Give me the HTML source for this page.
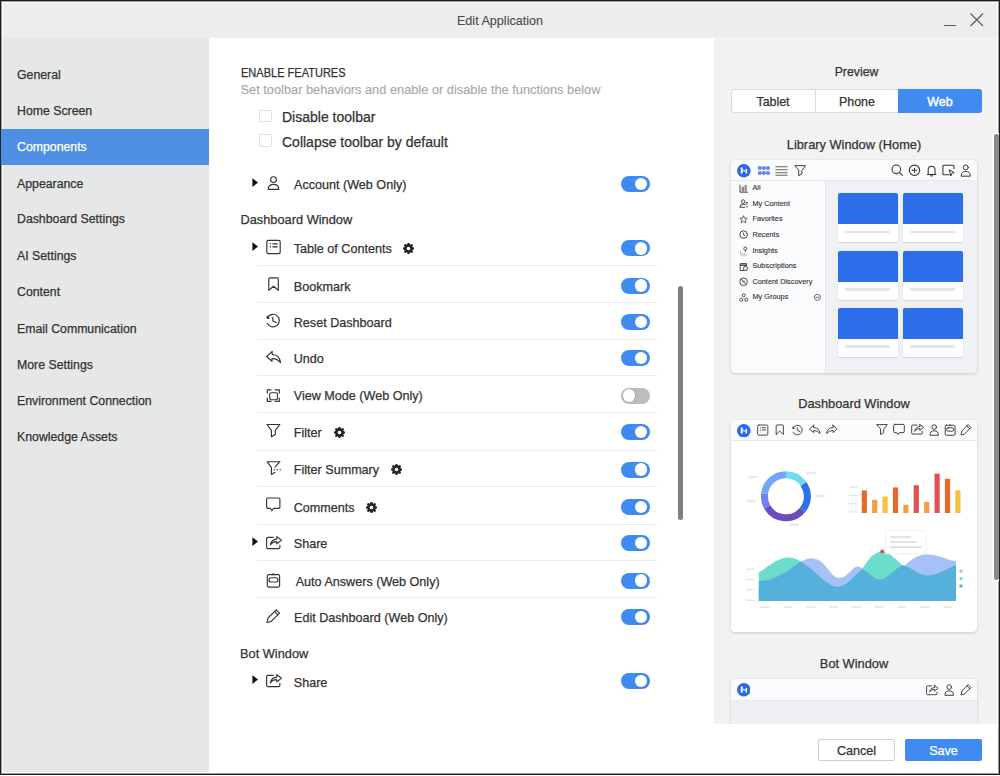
<!DOCTYPE html>
<html><head><meta charset="utf-8"><style>
html,body{margin:0;padding:0;width:1000px;height:776px;overflow:hidden;background:#fff;}
body{position:relative;font-family:"Liberation Sans", sans-serif;}
.a{position:absolute;}
.t{position:absolute;white-space:nowrap;-webkit-text-stroke:0.25px currentColor;}
</style></head><body>
<div class="a" style="left:0px;top:0px;width:1000px;height:775px;background:#1e1e1e"></div>
<div class="a" style="left:1px;top:1px;width:998px;height:773px;background:#9a9a9a"></div>
<div class="a" style="left:2px;top:2px;width:996px;height:771px;background:#ffffff"></div>
<div class="a" style="left:3px;top:3px;width:994px;height:35px;background:#ededed"></div>
<div class="t" style="left:400px;top:12.63px;width:200px;text-align:center;font-size:12.6px;line-height:16px;color:#4a4a4a;font-weight:normal;-webkit-text-stroke:0.1px currentColor">Edit Application</div>
<div class="a" style="left:943.5px;top:25px;width:12px;height:1.2px;background:#5a5a5a"></div>
<svg class="a" style="left:969px;top:12px;" width="15" height="15" viewBox="0 0 15 15"><path d="M1.5 1.5L14 14M14 1.5L1.5 14" stroke="#5a5a5a" stroke-width="1.15"/></svg>
<div class="a" style="left:3px;top:38px;width:206px;height:734px;background:#e6e8e8"></div>
<div class="a" style="left:1px;top:129px;width:208px;height:36px;background:#4e8fe3"></div>
<div class="t" style="left:17px;top:66.54px;font-size:12.3px;line-height:16px;color:#333;font-weight:normal;">General</div>
<div class="t" style="left:17px;top:102.74px;font-size:12.3px;line-height:16px;color:#333;font-weight:normal;">Home Screen</div>
<div class="t" style="left:17px;top:139.04px;font-size:12.3px;line-height:16px;color:#fff;font-weight:normal;">Components</div>
<div class="t" style="left:17px;top:175.74px;font-size:12.3px;line-height:16px;color:#333;font-weight:normal;">Appearance</div>
<div class="t" style="left:17px;top:211.34px;font-size:12.3px;line-height:16px;color:#333;font-weight:normal;">Dashboard Settings</div>
<div class="t" style="left:17px;top:247.64px;font-size:12.3px;line-height:16px;color:#333;font-weight:normal;">AI Settings</div>
<div class="t" style="left:17px;top:283.94px;font-size:12.3px;line-height:16px;color:#333;font-weight:normal;">Content</div>
<div class="t" style="left:17px;top:320.54px;font-size:12.3px;line-height:16px;color:#333;font-weight:normal;">Email Communication</div>
<div class="t" style="left:17px;top:356.74px;font-size:12.3px;line-height:16px;color:#333;font-weight:normal;">More Settings</div>
<div class="t" style="left:17px;top:392.74px;font-size:12.3px;line-height:16px;color:#333;font-weight:normal;">Environment Connection</div>
<div class="t" style="left:17px;top:428.64px;font-size:12.3px;line-height:16px;color:#333;font-weight:normal;">Knowledge Assets</div>
<div class="a" style="left:714px;top:38px;width:283px;height:686px;background:#f2f2f2"></div>
<div class="t" style="left:240.5px;top:64.70px;font-size:12.4px;line-height:16px;color:#333;font-weight:normal;transform:scaleX(0.89);transform-origin:0 0">ENABLE FEATURES</div>
<div class="t" style="left:240.5px;top:81.06px;font-size:12.8px;line-height:17px;color:#a6a6a6;font-weight:normal;-webkit-text-stroke:0.1px currentColor">Set toolbar behaviors and enable or disable the functions below</div>
<div class="a" style="left:259px;top:109.5px;width:12.5px;height:12.5px;border:1px solid #e0e0e0;border-radius:2px;box-sizing:border-box;background:#fff"></div>
<div class="a" style="left:259px;top:134px;width:12.5px;height:12.5px;border:1px solid #e0e0e0;border-radius:2px;box-sizing:border-box;background:#fff"></div>
<div class="t" style="left:282px;top:108.15px;font-size:14px;line-height:18px;color:#333;font-weight:normal;">Disable toolbar</div>
<div class="t" style="left:282px;top:132.65px;font-size:14px;line-height:18px;color:#333;font-weight:normal;">Collapse toolbar by default</div>
<div class="t" style="left:294px;top:176.93px;font-size:12.6px;line-height:16px;color:#333;font-weight:normal;">Account (Web Only)</div>
<svg class="a" style="left:262px;top:172px;" width="24" height="24" viewBox="0 0 24 24"><g fill="none" stroke="#333" stroke-width="1.15" stroke-linejoin="round" stroke-linecap="round"><circle cx="11.5" cy="7.6" r="2.9"/><path d="M6.2 17.4C6.2 13.6 8.2 12.3 11.5 12.3C14.8 12.3 16.8 13.6 16.8 17.4Z"/></g></svg>
<div class="a" style="left:621px;top:176px;width:29px;height:16px;background:#3f8bf2;border-radius:8px"></div>
<div class="a" style="left:635px;top:177.8px;width:12.4px;height:12.4px;background:#fff;border-radius:50%"></div>
<svg class="a" style="left:252px;top:177.8px;" width="7" height="10" viewBox="0 0 7 10"><path d="M0.4 0.2L6 4.6L0.4 9.1Z" fill="#111"/></svg>
<div class="t" style="left:293.75px;top:241.38px;font-size:12.6px;line-height:16px;color:#333;font-weight:normal;">Table of Contents</div>
<svg class="a" style="left:262px;top:235px;" width="24" height="24" viewBox="0 0 24 24"><g fill="none" stroke="#333" stroke-width="1.15" stroke-linejoin="round" stroke-linecap="round"><rect x="4.8" y="5.3" width="13.4" height="13.3" rx="1.6"/><path d="M10.8 8.8H15.2M10.8 11.8H15.2"/></g><circle cx="8.4" cy="8.8" r="0.7" fill="#333"/><circle cx="8.4" cy="11.8" r="0.7" fill="#333"/><circle cx="8.4" cy="14.6" r="0.6" fill="#999"/></svg>
<div class="a" style="left:621px;top:240.4px;width:29px;height:16px;background:#3f8bf2;border-radius:8px"></div>
<div class="a" style="left:635px;top:242.20000000000002px;width:12.4px;height:12.4px;background:#fff;border-radius:50%"></div>
<svg class="a" style="left:252px;top:242.20000000000002px;" width="7" height="10" viewBox="0 0 7 10"><path d="M0.4 0.2L6 4.6L0.4 9.1Z" fill="#111"/></svg>
<svg class="a" style="left:403.0px;top:242.9px;" width="11" height="11" viewBox="0 0 11 11"><polygon points="5.12,0.11 5.88,0.11 6.84,2.27 9.04,1.42 9.58,1.96 8.73,4.16 10.89,5.12 10.89,5.88 8.73,6.84 9.58,9.04 9.04,9.58 6.84,8.73 5.88,10.89 5.12,10.89 4.16,8.73 1.96,9.58 1.42,9.04 2.27,6.84 0.11,5.88 0.11,5.12 2.27,4.16 1.42,1.96 1.96,1.42 4.16,2.27" fill="#222" stroke="#222" stroke-width="0.9" stroke-linejoin="round"/><circle cx="5.5" cy="5.5" r="1.8" fill="#fff"/></svg>
<div class="a" style="left:257px;top:265.0px;width:400px;height:1px;background:#ebebeb"></div>
<div class="t" style="left:293.75px;top:278.88px;font-size:12.6px;line-height:16px;color:#333;font-weight:normal;">Bookmark</div>
<svg class="a" style="left:262px;top:274px;" width="24" height="24" viewBox="0 0 24 24"><g fill="none" stroke="#333" stroke-width="1.15" stroke-linejoin="round" stroke-linecap="round"><path d="M6.8 16.3V5Q6.8 3.9 7.9 3.9H15.2Q16.3 3.9 16.3 5V16.3L11.55 12.3Z"/></g></svg>
<div class="a" style="left:621px;top:277.6px;width:29px;height:16px;background:#3f8bf2;border-radius:8px"></div>
<div class="a" style="left:635px;top:279.40000000000003px;width:12.4px;height:12.4px;background:#fff;border-radius:50%"></div>
<div class="a" style="left:257px;top:301.5px;width:400px;height:1px;background:#ebebeb"></div>
<div class="t" style="left:293.75px;top:315.13px;font-size:12.6px;line-height:16px;color:#333;font-weight:normal;">Reset Dashboard</div>
<svg class="a" style="left:262px;top:310px;" width="24" height="24" viewBox="0 0 24 24"><g fill="none" stroke="#333" stroke-width="1.15" stroke-linejoin="round" stroke-linecap="round"><path d="M5.6 7.4A6.3 6.3 0 1 1 5.4 13.4"/><path d="M10.8 7.4V10.9L14.2 12.6"/></g><path d="M4.5 5.6L4.9 9.1L8.2 8.5Z" fill="#222"/></svg>
<div class="a" style="left:621px;top:314px;width:29px;height:16px;background:#3f8bf2;border-radius:8px"></div>
<div class="a" style="left:635px;top:315.8px;width:12.4px;height:12.4px;background:#fff;border-radius:50%"></div>
<div class="a" style="left:257px;top:338.5px;width:400px;height:1px;background:#ebebeb"></div>
<div class="t" style="left:293.75px;top:350.63px;font-size:12.6px;line-height:16px;color:#333;font-weight:normal;">Undo</div>
<svg class="a" style="left:262px;top:346px;" width="24" height="24" viewBox="0 0 24 24"><g fill="none" stroke="#333" stroke-width="1.15" stroke-linejoin="round" stroke-linecap="round"><path d="M10.2 5.4L4.7 10.5L10 15.3V12.6Q15.2 12.3 18.6 16.6Q17.6 8.8 10.2 8.5Z"/></g></svg>
<div class="a" style="left:621px;top:350px;width:29px;height:16px;background:#3f8bf2;border-radius:8px"></div>
<div class="a" style="left:635px;top:351.8px;width:12.4px;height:12.4px;background:#fff;border-radius:50%"></div>
<div class="a" style="left:257px;top:375.0px;width:400px;height:1px;background:#ebebeb"></div>
<div class="t" style="left:293.75px;top:388.33px;font-size:12.6px;line-height:16px;color:#333;font-weight:normal;">View Mode (Web Only)</div>
<svg class="a" style="left:262px;top:383px;" width="24" height="24" viewBox="0 0 24 24"><g fill="none" stroke="#333" stroke-width="1.15" stroke-linejoin="round" stroke-linecap="round"><path d="M5.3 10.1V6.8H9.1M13.3 6.8H17.3V10.1M5.3 15.1V18.4H9.1M13.3 18.4H17.3V15.1"/><rect x="7.7" y="9.7" width="7.8" height="7" rx="1.6"/></g></svg>
<div class="a" style="left:621px;top:387.5px;width:29px;height:16px;background:#bdbdbd;border-radius:8px"></div>
<div class="a" style="left:622.7px;top:389.1px;width:12.6px;height:12.6px;background:#fff;border-radius:50%;box-shadow:0 0 0 0.8px #a8a8a8"></div>
<div class="a" style="left:257px;top:411.5px;width:400px;height:1px;background:#ebebeb"></div>
<div class="t" style="left:293.75px;top:425.13px;font-size:12.6px;line-height:16px;color:#333;font-weight:normal;">Filter</div>
<svg class="a" style="left:262px;top:420px;" width="24" height="24" viewBox="0 0 24 24"><g fill="none" stroke="#333" stroke-width="1.15" stroke-linejoin="round" stroke-linecap="round"><path d="M5 4.5H17.9L13.3 10.3V14.6L9.4 16.8V10.3Z"/></g></svg>
<div class="a" style="left:621px;top:424.3px;width:29px;height:16px;background:#3f8bf2;border-radius:8px"></div>
<div class="a" style="left:635px;top:426.1px;width:12.4px;height:12.4px;background:#fff;border-radius:50%"></div>
<svg class="a" style="left:333.5px;top:426.8px;" width="11" height="11" viewBox="0 0 11 11"><polygon points="5.12,0.11 5.88,0.11 6.84,2.27 9.04,1.42 9.58,1.96 8.73,4.16 10.89,5.12 10.89,5.88 8.73,6.84 9.58,9.04 9.04,9.58 6.84,8.73 5.88,10.89 5.12,10.89 4.16,8.73 1.96,9.58 1.42,9.04 2.27,6.84 0.11,5.88 0.11,5.12 2.27,4.16 1.42,1.96 1.96,1.42 4.16,2.27" fill="#222" stroke="#222" stroke-width="0.9" stroke-linejoin="round"/><circle cx="5.5" cy="5.5" r="1.8" fill="#fff"/></svg>
<div class="a" style="left:257px;top:449.5px;width:400px;height:1px;background:#ebebeb"></div>
<div class="t" style="left:293.75px;top:462.33px;font-size:12.6px;line-height:16px;color:#333;font-weight:normal;">Filter Summary</div>
<svg class="a" style="left:262px;top:457px;" width="24" height="24" viewBox="0 0 24 24"><g fill="none" stroke="#333" stroke-width="1.15" stroke-linejoin="round" stroke-linecap="round"><path d="M13 10.2L17.9 4.7H5L9.4 10.3V17.4L13 15.3"/></g><circle cx="12.4" cy="12.7" r="0.7" fill="#333"/><circle cx="15.2" cy="12.7" r="0.7" fill="#333"/><circle cx="18.2" cy="12.7" r="0.7" fill="#333"/></svg>
<div class="a" style="left:621px;top:461.5px;width:29px;height:16px;background:#3f8bf2;border-radius:8px"></div>
<div class="a" style="left:635px;top:463.3px;width:12.4px;height:12.4px;background:#fff;border-radius:50%"></div>
<svg class="a" style="left:390.5px;top:464.0px;" width="11" height="11" viewBox="0 0 11 11"><polygon points="5.12,0.11 5.88,0.11 6.84,2.27 9.04,1.42 9.58,1.96 8.73,4.16 10.89,5.12 10.89,5.88 8.73,6.84 9.58,9.04 9.04,9.58 6.84,8.73 5.88,10.89 5.12,10.89 4.16,8.73 1.96,9.58 1.42,9.04 2.27,6.84 0.11,5.88 0.11,5.12 2.27,4.16 1.42,1.96 1.96,1.42 4.16,2.27" fill="#222" stroke="#222" stroke-width="0.9" stroke-linejoin="round"/><circle cx="5.5" cy="5.5" r="1.8" fill="#fff"/></svg>
<div class="a" style="left:257px;top:486.0px;width:400px;height:1px;background:#ebebeb"></div>
<div class="t" style="left:293.75px;top:499.83px;font-size:12.6px;line-height:16px;color:#333;font-weight:normal;">Comments</div>
<svg class="a" style="left:262px;top:495px;" width="24" height="24" viewBox="0 0 24 24"><g fill="none" stroke="#333" stroke-width="1.15" stroke-linejoin="round" stroke-linecap="round"><path d="M6 3H16.5Q17.9 3 17.9 4.4V11.9Q17.9 13.3 16.5 13.3H11.6L9.9 15.8L8.3 13.3H6Q4.6 13.3 4.6 11.9V4.4Q4.6 3 6 3Z"/></g></svg>
<div class="a" style="left:621px;top:499.3px;width:29px;height:16px;background:#3f8bf2;border-radius:8px"></div>
<div class="a" style="left:635px;top:501.1px;width:12.4px;height:12.4px;background:#fff;border-radius:50%"></div>
<svg class="a" style="left:365.9px;top:501.8px;" width="11" height="11" viewBox="0 0 11 11"><polygon points="5.12,0.11 5.88,0.11 6.84,2.27 9.04,1.42 9.58,1.96 8.73,4.16 10.89,5.12 10.89,5.88 8.73,6.84 9.58,9.04 9.04,9.58 6.84,8.73 5.88,10.89 5.12,10.89 4.16,8.73 1.96,9.58 1.42,9.04 2.27,6.84 0.11,5.88 0.11,5.12 2.27,4.16 1.42,1.96 1.96,1.42 4.16,2.27" fill="#222" stroke="#222" stroke-width="0.9" stroke-linejoin="round"/><circle cx="5.5" cy="5.5" r="1.8" fill="#fff"/></svg>
<div class="a" style="left:257px;top:523.5px;width:400px;height:1px;background:#ebebeb"></div>
<div class="t" style="left:293.75px;top:535.93px;font-size:12.6px;line-height:16px;color:#333;font-weight:normal;">Share</div>
<svg class="a" style="left:262px;top:531px;" width="24" height="24" viewBox="0 0 24 24"><g fill="none" stroke="#333" stroke-width="1.15" stroke-linejoin="round" stroke-linecap="round"><path d="M11.3 6.3H6Q4.6 6.3 4.6 7.7V16.2Q4.6 17.6 6 17.6H16.5Q17.9 17.6 17.9 16.2V14.3"/><path d="M14.8 5.6L19.4 9.3L14.8 12.9V10.7Q10.6 10.5 8.3 14Q9.4 8.5 14.8 8.1Z"/></g></svg>
<div class="a" style="left:621px;top:535px;width:29px;height:16px;background:#3f8bf2;border-radius:8px"></div>
<div class="a" style="left:635px;top:536.8px;width:12.4px;height:12.4px;background:#fff;border-radius:50%"></div>
<svg class="a" style="left:252px;top:536.8px;" width="7" height="10" viewBox="0 0 7 10"><path d="M0.4 0.2L6 4.6L0.4 9.1Z" fill="#111"/></svg>
<div class="a" style="left:257px;top:560.0px;width:400px;height:1px;background:#ebebeb"></div>
<div class="t" style="left:295.7px;top:574.13px;font-size:12.6px;line-height:16px;color:#333;font-weight:normal;">Auto Answers (Web Only)</div>
<svg class="a" style="left:262px;top:568px;" width="24" height="24" viewBox="0 0 24 24"><g fill="none" stroke="#333" stroke-width="1.15" stroke-linejoin="round" stroke-linecap="round"><rect x="5.3" y="6.6" width="12.3" height="12.5" rx="1.5"/><rect x="7" y="9.7" width="9" height="4.3" rx="2.1"/><path d="M10.3 6.6Q11.4 5 12.5 6.6"/></g></svg>
<div class="a" style="left:621px;top:572.5px;width:29px;height:16px;background:#3f8bf2;border-radius:8px"></div>
<div class="a" style="left:635px;top:574.3px;width:12.4px;height:12.4px;background:#fff;border-radius:50%"></div>
<div class="a" style="left:257px;top:596.5px;width:400px;height:1px;background:#ebebeb"></div>
<div class="t" style="left:294px;top:609.83px;font-size:12.6px;line-height:16px;color:#333;font-weight:normal;">Edit Dashboard (Web Only)</div>
<svg class="a" style="left:262px;top:605px;" width="24" height="24" viewBox="0 0 24 24"><g fill="none" stroke="#333" stroke-width="1.15" stroke-linejoin="round" stroke-linecap="round"><path d="M14.2 4.8L17.5 8.2L9.2 16.4L5 17.5L6 13Z"/><path d="M12.6 6.4L15.9 9.8"/></g></svg>
<div class="a" style="left:621px;top:609px;width:29px;height:16px;background:#3f8bf2;border-radius:8px"></div>
<div class="a" style="left:635px;top:610.8px;width:12.4px;height:12.4px;background:#fff;border-radius:50%"></div>
<div class="t" style="left:293.75px;top:674.53px;font-size:12.6px;line-height:16px;color:#333;font-weight:normal;">Share</div>
<svg class="a" style="left:262px;top:669px;" width="24" height="24" viewBox="0 0 24 24"><g fill="none" stroke="#333" stroke-width="1.15" stroke-linejoin="round" stroke-linecap="round"><path d="M11.3 6.3H6Q4.6 6.3 4.6 7.7V16.2Q4.6 17.6 6 17.6H16.5Q17.9 17.6 17.9 16.2V14.3"/><path d="M14.8 5.6L19.4 9.3L14.8 12.9V10.7Q10.6 10.5 8.3 14Q9.4 8.5 14.8 8.1Z"/></g></svg>
<div class="a" style="left:621px;top:673px;width:29px;height:16px;background:#3f8bf2;border-radius:8px"></div>
<div class="a" style="left:635px;top:674.8px;width:12.4px;height:12.4px;background:#fff;border-radius:50%"></div>
<svg class="a" style="left:252px;top:674.8px;" width="7" height="10" viewBox="0 0 7 10"><path d="M0.4 0.2L6 4.6L0.4 9.1Z" fill="#111"/></svg>
<div class="t" style="left:240.5px;top:211.31px;font-size:12.8px;line-height:17px;color:#333;font-weight:normal;">Dashboard Window</div>
<div class="t" style="left:240px;top:645.06px;font-size:12.8px;line-height:17px;color:#333;font-weight:normal;">Bot Window</div>
<div class="a" style="left:678px;top:286px;width:5px;height:234px;background:#808080;border-radius:2.5px"></div>
<div class="t" style="left:731px;top:63.74px;width:251px;text-align:center;font-size:12.3px;line-height:16px;color:#333;font-weight:normal;">Preview</div>
<div class="a" style="left:731px;top:88.5px;width:251px;height:24.5px;background:#fff;border:1px solid #dadada;border-radius:3px;box-sizing:border-box"></div>
<div class="a" style="left:815px;top:88.5px;width:1px;height:24.5px;background:#dadada"></div>
<div class="a" style="left:898px;top:88.5px;width:84px;height:24.5px;background:#3f8bf2;border-radius:0 3px 3px 0"></div>
<div class="t" style="left:731px;top:93.70px;width:84px;text-align:center;font-size:12.4px;line-height:16px;color:#333;font-weight:normal;">Tablet</div>
<div class="t" style="left:816px;top:93.70px;width:82px;text-align:center;font-size:12.4px;line-height:16px;color:#333;font-weight:normal;">Phone</div>
<div class="t" style="left:898px;top:93.70px;width:84px;text-align:center;font-size:12.4px;line-height:16px;color:#fff;font-weight:normal;-webkit-text-stroke:0.45px #fff">Web</div>
<div class="t" style="left:731px;top:135.76px;width:246px;text-align:center;font-size:12.8px;line-height:17px;color:#333;font-weight:normal;">Library Window (Home)</div>
<div class="t" style="left:731px;top:394.86px;width:246px;text-align:center;font-size:12.8px;line-height:17px;color:#333;font-weight:normal;">Dashboard Window</div>
<div class="t" style="left:731px;top:655.06px;width:246px;text-align:center;font-size:12.8px;line-height:17px;color:#333;font-weight:normal;">Bot Window</div>
<div class="a" style="left:731px;top:160px;width:246px;height:213px;background:#fafbfd;border-radius:4px;box-shadow:0 1px 3px rgba(0,0,0,0.16),0 0 1px rgba(0,0,0,0.12)"></div>
<div class="a" style="left:826px;top:180.5px;width:151px;height:192.5px;background:#f0f1f4;border-radius:0 0 4px 0"></div>
<div class="a" style="left:825px;top:180.5px;width:1px;height:192.5px;background:#e4e6ea"></div>
<div class="a" style="left:731px;top:180px;width:246px;height:1px;background:#e6e8ec"></div>
<svg class="a" style="left:737.00px;top:164.10px" width="13.60" height="13.60" viewBox="0 0 13.6 13.6"><circle cx="6.8" cy="6.8" r="6.8" fill="#2a68ee"/><rect x="3.80" y="3.50" width="1.9" height="6" fill="#fff"/><rect x="8.60" y="4.90" width="1.5" height="4.6" fill="#fff"/><path d="M5.70 6.40L8.60 7.20" stroke="#dfe6ff" stroke-width="1.3"/></svg>
<svg class="a" style="left:755px;top:164px;" width="17" height="13" viewBox="0 0 17 13"><ellipse cx="4.80" cy="4.00" rx="2.1" ry="1.9" fill="#6a86f2"/><ellipse cx="4.80" cy="9.00" rx="2.1" ry="1.9" fill="#6a86f2"/><ellipse cx="8.90" cy="4.00" rx="2.1" ry="1.9" fill="#6a86f2"/><ellipse cx="8.90" cy="9.00" rx="2.1" ry="1.9" fill="#6a86f2"/><ellipse cx="13.00" cy="4.00" rx="2.1" ry="1.9" fill="#6a86f2"/><ellipse cx="13.00" cy="9.00" rx="2.1" ry="1.9" fill="#6a86f2"/></svg>
<svg class="a" style="left:774px;top:164px;" width="15" height="13" viewBox="0 0 15 13"><path d="M1.5 2.8H13.5M1.5 5.8H13.5M1.5 8.8H13.5M1.5 11.3H13.5" stroke="#666" stroke-width="1.1"/></svg>
<svg class="a" style="left:790.91px;top:161.77px;overflow:visible" width="19.68" height="19.68" viewBox="0 0 24 24"><g fill="none" stroke="#333" stroke-width="1.15" stroke-linejoin="round" stroke-linecap="round"><path d="M5 4.5H17.9L13.3 10.3V14.6L9.4 16.8V10.3Z"/></g></svg>
<svg class="a" style="left:890px;top:163px;" width="15" height="15" viewBox="0 0 15 15"><circle cx="6.3" cy="6.3" r="4.3" fill="none" stroke="#333" stroke-width="1.05"/><path d="M9.4 9.4L12.8 12.6" stroke="#333" stroke-width="1.1"/></svg>
<svg class="a" style="left:907px;top:163px;" width="15" height="15" viewBox="0 0 15 15"><circle cx="7.5" cy="7.3" r="5.2" fill="none" stroke="#333" stroke-width="1.05"/><path d="M4.8 7.3H10.2M7.5 4.9V9.7" stroke="#333" stroke-width="1.05"/></svg>
<svg class="a" style="left:924px;top:163px;" width="15" height="15" viewBox="0 0 15 15"><path d="M3 11.5H12.2M4.2 11.3V7.2Q4.2 3.3 7.6 3.3Q11 3.3 11 7.2V11.3M6.3 12.2Q7.6 14 8.9 12.2" fill="none" stroke="#333" stroke-width="1.05" stroke-linejoin="round"/></svg>
<svg class="a" style="left:941px;top:163px;" width="15" height="15" viewBox="0 0 15 15"><path d="M8.5 11.8H3Q1.9 11.8 1.9 10.7V3.3Q1.9 2.3 3 2.3H11.8Q12.9 2.3 12.9 3.3V6.2" fill="none" stroke="#333" stroke-width="1.05"/><path d="M8.2 6.8L13.2 9.6L10.8 10.4L9.8 13Z" fill="none" stroke="#333" stroke-width="1"/></svg>
<svg class="a" style="left:956.23px;top:161.05px;overflow:visible" width="20.40" height="20.40" viewBox="0 0 24 24"><g fill="none" stroke="#333" stroke-width="1.15" stroke-linejoin="round" stroke-linecap="round"><circle cx="11.5" cy="7.6" r="2.9"/><path d="M6.2 17.4C6.2 13.6 8.2 12.3 11.5 12.3C14.8 12.3 16.8 13.6 16.8 17.4Z"/></g></svg>
<div class="t" style="left:752.4px;top:183.25px;font-size:7.35px;line-height:10px;color:#333;font-weight:normal;-webkit-text-stroke:0.12px currentColor">All</div>
<svg class="a" style="left:739px;top:183.5px;" width="10" height="9" viewBox="0 0 10 9"><path d="M1 0.8V8.2H9" fill="none" stroke="#333" stroke-width="0.9"/><path d="M3.2 7.6V3.2H4.4V7.6M6 7.6V1.6H7.2V7.6" fill="none" stroke="#444" stroke-width="0.7"/></svg>
<div class="t" style="left:752.4px;top:198.85px;font-size:7.35px;line-height:10px;color:#333;font-weight:normal;-webkit-text-stroke:0.12px currentColor">My Content</div>
<svg class="a" style="left:739px;top:199.1px;" width="10" height="9" viewBox="0 0 10 9"><circle cx="4.2" cy="2.6" r="1.8" fill="none" stroke="#333" stroke-width="0.9"/><path d="M0.9 8.3Q0.9 5.2 4.2 5.2Q6 5.2 6.8 6.2M0.9 8.3H6" fill="none" stroke="#333" stroke-width="0.9"/><path d="M6.6 3.5H9M6.6 5H9M7 7.8H9" stroke="#444" stroke-width="0.8"/></svg>
<div class="t" style="left:752.4px;top:214.45px;font-size:7.35px;line-height:10px;color:#333;font-weight:normal;-webkit-text-stroke:0.12px currentColor">Favorites</div>
<svg class="a" style="left:739px;top:214.7px;" width="10" height="9" viewBox="0 0 10 9"><polygon points="4.50,0.70 5.50,3.22 8.21,3.39 6.12,5.13 6.79,7.76 4.50,6.30 2.21,7.76 2.88,5.13 0.79,3.39 3.50,3.22" fill="none" stroke="#444" stroke-width="0.8"/></svg>
<div class="t" style="left:752.4px;top:230.05px;font-size:7.35px;line-height:10px;color:#333;font-weight:normal;-webkit-text-stroke:0.12px currentColor">Recents</div>
<svg class="a" style="left:739px;top:230.29999999999998px;" width="10" height="10" viewBox="0 0 10 10"><circle cx="4.6" cy="4.6" r="3.8" fill="none" stroke="#333" stroke-width="0.9"/><path d="M4.4 2.5V4.8L6 5.8" fill="none" stroke="#333" stroke-width="0.8"/></svg>
<div class="t" style="left:752.4px;top:245.65px;font-size:7.35px;line-height:10px;color:#333;font-weight:normal;-webkit-text-stroke:0.12px currentColor">Insights</div>
<svg class="a" style="left:739px;top:245.89999999999998px;" width="10" height="10" viewBox="0 0 10 10"><path d="M1.5 8.5V5M3.5 8.5V6.5M5.5 8.5V7" stroke="#b9b9b9" stroke-width="0.9"/><circle cx="6.3" cy="2.6" r="1.6" fill="none" stroke="#444" stroke-width="0.9"/><path d="M6.3 4.3V6" stroke="#444" stroke-width="0.9"/><path d="M0.8 9H8.5" stroke="#999" stroke-width="0.6"/></svg>
<div class="t" style="left:752.4px;top:261.25px;font-size:7.35px;line-height:10px;color:#333;font-weight:normal;-webkit-text-stroke:0.12px currentColor">Subscriptions</div>
<svg class="a" style="left:739px;top:261.5px;" width="10" height="10" viewBox="0 0 10 10"><path d="M5 8.5H1.2V1.6H7.6V3.8" fill="none" stroke="#333" stroke-width="0.9"/><path d="M1.2 3.2H7.6" stroke="#333" stroke-width="1.3"/><circle cx="6.5" cy="6.5" r="2.1" fill="none" stroke="#333" stroke-width="0.9"/></svg>
<div class="t" style="left:752.4px;top:276.85px;font-size:7.35px;line-height:10px;color:#333;font-weight:normal;-webkit-text-stroke:0.12px currentColor">Content Discovery</div>
<svg class="a" style="left:739px;top:277.09999999999997px;" width="10" height="10" viewBox="0 0 10 10"><circle cx="4.6" cy="4.8" r="3.8" fill="none" stroke="#333" stroke-width="0.9"/><path d="M2.2 2.2L7.2 7.4M3.3 5.2Q5.5 3 6 4.5" fill="none" stroke="#333" stroke-width="0.8"/></svg>
<div class="t" style="left:752.4px;top:292.45px;font-size:7.35px;line-height:10px;color:#333;font-weight:normal;-webkit-text-stroke:0.12px currentColor">My Groups</div>
<svg class="a" style="left:739px;top:292.7px;" width="10" height="10" viewBox="0 0 10 10"><circle cx="4.7" cy="2.3" r="1.5" fill="none" stroke="#333" stroke-width="0.85"/><circle cx="2.3" cy="6.7" r="1.5" fill="none" stroke="#333" stroke-width="0.85"/><circle cx="7.2" cy="6.7" r="1.5" fill="none" stroke="#333" stroke-width="0.85"/></svg>
<svg class="a" style="left:813px;top:293px;" width="9" height="9" viewBox="0 0 9 9"><circle cx="4.4" cy="4.3" r="3" fill="none" stroke="#555" stroke-width="0.9"/><path d="M2.6 4.3H6.2" stroke="#555" stroke-width="0.9"/></svg>
<div class="a" style="left:838px;top:193px;width:60px;height:49px;background:#fff;border-radius:2px;box-shadow:0 0.5px 1.5px rgba(0,0,0,0.12);overflow:hidden"></div>
<div class="a" style="left:838px;top:193px;width:60px;height:31.3px;background:#2c6eea;border-radius:2px 2px 0 0"></div>
<div class="a" style="left:845.3px;top:230.5px;width:45px;height:2.6px;background:#e2e4e8;border-radius:1.3px"></div>
<div class="a" style="left:903px;top:193px;width:60px;height:49px;background:#fff;border-radius:2px;box-shadow:0 0.5px 1.5px rgba(0,0,0,0.12);overflow:hidden"></div>
<div class="a" style="left:903px;top:193px;width:60px;height:31.3px;background:#2c6eea;border-radius:2px 2px 0 0"></div>
<div class="a" style="left:910.3px;top:230.5px;width:45px;height:2.6px;background:#e2e4e8;border-radius:1.3px"></div>
<div class="a" style="left:838px;top:250.5px;width:60px;height:49px;background:#fff;border-radius:2px;box-shadow:0 0.5px 1.5px rgba(0,0,0,0.12);overflow:hidden"></div>
<div class="a" style="left:838px;top:250.5px;width:60px;height:31.3px;background:#2c6eea;border-radius:2px 2px 0 0"></div>
<div class="a" style="left:845.3px;top:288.0px;width:45px;height:2.6px;background:#e2e4e8;border-radius:1.3px"></div>
<div class="a" style="left:903px;top:250.5px;width:60px;height:49px;background:#fff;border-radius:2px;box-shadow:0 0.5px 1.5px rgba(0,0,0,0.12);overflow:hidden"></div>
<div class="a" style="left:903px;top:250.5px;width:60px;height:31.3px;background:#2c6eea;border-radius:2px 2px 0 0"></div>
<div class="a" style="left:910.3px;top:288.0px;width:45px;height:2.6px;background:#e2e4e8;border-radius:1.3px"></div>
<div class="a" style="left:838px;top:307.5px;width:60px;height:49px;background:#fff;border-radius:2px;box-shadow:0 0.5px 1.5px rgba(0,0,0,0.12);overflow:hidden"></div>
<div class="a" style="left:838px;top:307.5px;width:60px;height:31.3px;background:#2c6eea;border-radius:2px 2px 0 0"></div>
<div class="a" style="left:845.3px;top:345.0px;width:45px;height:2.6px;background:#e2e4e8;border-radius:1.3px"></div>
<div class="a" style="left:903px;top:307.5px;width:60px;height:49px;background:#fff;border-radius:2px;box-shadow:0 0.5px 1.5px rgba(0,0,0,0.12);overflow:hidden"></div>
<div class="a" style="left:903px;top:307.5px;width:60px;height:31.3px;background:#2c6eea;border-radius:2px 2px 0 0"></div>
<div class="a" style="left:910.3px;top:345.0px;width:45px;height:2.6px;background:#e2e4e8;border-radius:1.3px"></div>
<div class="a" style="left:731px;top:420px;width:246px;height:212px;background:#fff;border-radius:4px;box-shadow:0 1px 3px rgba(0,0,0,0.16),0 0 1px rgba(0,0,0,0.12)"></div>
<div class="a" style="left:731px;top:420px;width:246px;height:20px;background:#fafbfd;border-radius:4px 4px 0 0"></div>
<div class="a" style="left:731px;top:439.5px;width:246px;height:1px;background:#e8eaee"></div>
<svg class="a" style="left:737.10px;top:423.50px" width="13.60" height="13.60" viewBox="0 0 13.6 13.6"><circle cx="6.8" cy="6.8" r="6.8" fill="#2a68ee"/><rect x="3.80" y="3.50" width="1.9" height="6" fill="#fff"/><rect x="8.60" y="4.90" width="1.5" height="4.6" fill="#fff"/><path d="M5.70 6.40L8.60 7.20" stroke="#dfe6ff" stroke-width="1.3"/></svg>
<svg class="a" style="left:754.16px;top:420.62px;overflow:visible" width="18.24" height="18.24" viewBox="0 0 24 24"><g fill="none" stroke="#333" stroke-width="1.15" stroke-linejoin="round" stroke-linecap="round"><rect x="4.8" y="5.3" width="13.4" height="13.3" rx="1.6"/><path d="M10.8 8.8H15.2M10.8 11.8H15.2"/></g><circle cx="8.4" cy="8.8" r="0.7" fill="#333"/><circle cx="8.4" cy="11.8" r="0.7" fill="#333"/><circle cx="8.4" cy="14.6" r="0.6" fill="#999"/></svg>
<svg class="a" style="left:771.32px;top:421.95px;overflow:visible" width="18.24" height="18.24" viewBox="0 0 24 24"><g fill="none" stroke="#333" stroke-width="1.15" stroke-linejoin="round" stroke-linecap="round"><path d="M6.8 16.3V5Q6.8 3.9 7.9 3.9H15.2Q16.3 3.9 16.3 5V16.3L11.55 12.3Z"/></g></svg>
<svg class="a" style="left:788.64px;top:421.72px;overflow:visible" width="18.24" height="18.24" viewBox="0 0 24 24"><g fill="none" stroke="#333" stroke-width="1.15" stroke-linejoin="round" stroke-linecap="round"><path d="M5.6 7.4A6.3 6.3 0 1 1 5.4 13.4"/><path d="M10.8 7.4V10.9L14.2 12.6"/></g><path d="M4.5 5.6L4.9 9.1L8.2 8.5Z" fill="#222"/></svg>
<svg class="a" style="left:806.35px;top:421.26px;overflow:visible" width="18.24" height="18.24" viewBox="0 0 24 24"><g fill="none" stroke="#333" stroke-width="1.15" stroke-linejoin="round" stroke-linecap="round"><path d="M10.2 5.4L4.7 10.5L10 15.3V12.6Q15.2 12.3 18.6 16.6Q17.6 8.8 10.2 8.5Z"/></g></svg>
<svg class="a" style="left:823.25px;top:421.26px;overflow:visible" width="18.24" height="18.24" viewBox="0 0 24 24"><g transform="translate(23.3 0) scale(-1 1)"><g fill="none" stroke="#333" stroke-width="1.15" stroke-linejoin="round" stroke-linecap="round"><path d="M10.2 5.4L4.7 10.5L10 15.3V12.6Q15.2 12.3 18.6 16.6Q17.6 8.8 10.2 8.5Z"/></g></g></svg>
<svg class="a" style="left:873.04px;top:420.98px;overflow:visible" width="19.20" height="19.20" viewBox="0 0 24 24"><g fill="none" stroke="#333" stroke-width="1.15" stroke-linejoin="round" stroke-linecap="round"><path d="M5 4.5H17.9L13.3 10.3V14.6L9.4 16.8V10.3Z"/></g></svg>
<svg class="a" style="left:890.20px;top:421.98px;overflow:visible" width="19.20" height="19.20" viewBox="0 0 24 24"><g fill="none" stroke="#333" stroke-width="1.15" stroke-linejoin="round" stroke-linecap="round"><path d="M6 3H16.5Q17.9 3 17.9 4.4V11.9Q17.9 13.3 16.5 13.3H11.6L9.9 15.8L8.3 13.3H6Q4.6 13.3 4.6 11.9V4.4Q4.6 3 6 3Z"/></g></svg>
<svg class="a" style="left:907.70px;top:420.26px;overflow:visible" width="19.20" height="19.20" viewBox="0 0 24 24"><g fill="none" stroke="#333" stroke-width="1.15" stroke-linejoin="round" stroke-linecap="round"><path d="M11.3 6.3H6Q4.6 6.3 4.6 7.7V16.2Q4.6 17.6 6 17.6H16.5Q17.9 17.6 17.9 16.2V14.3"/><path d="M14.8 5.6L19.4 9.3L14.8 12.9V10.7Q10.6 10.5 8.3 14Q9.4 8.5 14.8 8.1Z"/></g></svg>
<svg class="a" style="left:924.70px;top:420.70px;overflow:visible" width="19.20" height="19.20" viewBox="0 0 24 24"><g fill="none" stroke="#333" stroke-width="1.15" stroke-linejoin="round" stroke-linecap="round"><circle cx="11.5" cy="7.6" r="2.9"/><path d="M6.2 17.4C6.2 13.6 8.2 12.3 11.5 12.3C14.8 12.3 16.8 13.6 16.8 17.4Z"/></g></svg>
<svg class="a" style="left:940.94px;top:419.54px;overflow:visible" width="19.20" height="19.20" viewBox="0 0 24 24"><g fill="none" stroke="#333" stroke-width="1.15" stroke-linejoin="round" stroke-linecap="round"><rect x="5.3" y="6.6" width="12.3" height="12.5" rx="1.5"/><rect x="7" y="9.7" width="9" height="4.3" rx="2.1"/><path d="M10.3 6.6Q11.4 5 12.5 6.6"/></g></svg>
<svg class="a" style="left:956.90px;top:420.58px;overflow:visible" width="19.20" height="19.20" viewBox="0 0 24 24"><g fill="none" stroke="#333" stroke-width="1.15" stroke-linejoin="round" stroke-linecap="round"><path d="M14.2 4.8L17.5 8.2L9.2 16.4L5 17.5L6 13Z"/><path d="M12.6 6.4L15.9 9.8"/></g></svg>
<svg class="a" style="left:731px;top:440px" width="246" height="192" viewBox="731 440 246 192"><path d="M785.90 474.80A21.5 21.5 0 0 1 803.51 483.97" fill="none" stroke="#6ddcf1" stroke-width="7"/><path d="M803.51 483.97A21.5 21.5 0 0 1 802.61 509.83" fill="none" stroke="#2f6fea" stroke-width="7"/><path d="M802.61 509.83A21.5 21.5 0 0 1 767.28 507.05" fill="none" stroke="#6a4dbd" stroke-width="7"/><path d="M767.28 507.05A21.5 21.5 0 0 1 764.56 493.68" fill="none" stroke="#6d80f0" stroke-width="7"/><path d="M764.56 493.68A21.5 21.5 0 0 1 785.90 474.80" fill="none" stroke="#73a6f6" stroke-width="7"/><rect x="748.3" y="475.8" width="10" height="2.4" rx="1.2" fill="#e9eaec"/><rect x="805.8" y="471.8" width="10" height="2.4" rx="1.2" fill="#e9eaec"/><rect x="814.8" y="494.8" width="10" height="2.4" rx="1.2" fill="#e9eaec"/><rect x="746.5" y="499.8" width="10" height="2.4" rx="1.2" fill="#e9eaec"/><rect x="789.0" y="523.5" width="10" height="2.4" rx="1.2" fill="#e9eaec"/><rect x="861.7" y="490.4" width="5.2" height="22.6" fill="#e8682a"/><rect x="872.1" y="499.8" width="5.2" height="13.2" fill="#f0a040"/><rect x="882.5" y="496.5" width="5.2" height="16.5" fill="#f6c23e"/><rect x="892.9" y="487.4" width="5.2" height="25.6" fill="#e8682a"/><rect x="903.3" y="504.8" width="5.2" height="8.2" fill="#f0a040"/><rect x="913.7" y="485.2" width="5.2" height="27.8" fill="#e05252"/><rect x="924.1" y="501.9" width="5.2" height="11.1" fill="#f0a040"/><rect x="934.5" y="473.7" width="5.2" height="39.3" fill="#e05252"/><rect x="944.9" y="478.8" width="5.2" height="34.2" fill="#e8682a"/><rect x="955.3" y="490.2" width="5.2" height="22.8" fill="#f6c23e"/><rect x="849" y="486.4" width="8.3" height="1.4" fill="#e0e5ea"/><rect x="849" y="494.7" width="8.3" height="1.4" fill="#e0e5ea"/><rect x="849" y="502.9" width="8.3" height="1.4" fill="#e0e5ea"/><rect x="849" y="511.2" width="8.3" height="1.4" fill="#e0e5ea"/><path d="M758.8 588C772 586 792 562 810 558.2C826 557.5 830 578 839 578C848 578 852 566.5 857.5 566.5C868 567 878 592 890 582C900 572 910 555 925.6 554.4C940 554 948 561 956 561V601H758.8Z" fill="#a6c1f6"/><path d="M758.8 572.5C766 569 776 557.6 788.5 557.6C797 557.6 803 563 808 568C822 582 840 600 852 585C858 577 866 560 874 554.5C878 552 880 551.4 882.4 551.4C890 552 896 560 902.8 565.2C915 575 940 588 956 588V601H758.8Z" fill="#6cdccc"/><path d="M758.8 581C768 581 782 577 800 561.5C813 567 826 586.8 838 586.8C846 586.8 854 576 862.6 568.8C868 572 874 579.6 880 579.6C888 579 895 568 902.8 565.2C912 567 918 575.4 927 575.4C938 575.4 948 568 956 565V601H758.8Z" fill="#56b0dc"/><circle cx="882.2" cy="551.4" r="1.9" fill="#e74a4c"/><rect x="885.5" y="530.5" width="40.5" height="23.3" fill="#fff" stroke="#eceef2" stroke-width="0.8"/><rect x="890.2" y="536.25" width="21" height="1.5" fill="#d6dadf"/><rect x="890.2" y="541.25" width="26.4" height="1.5" fill="#d6dadf"/><rect x="890.2" y="546.45" width="31.6" height="1.5" fill="#d6dadf"/><rect x="959.5" y="569.7" width="3" height="3" rx="0.6" fill="#a6c1f6"/><rect x="959.5" y="577.2" width="3" height="3" rx="0.6" fill="#6cdccc"/><rect x="959.5" y="584.5" width="3" height="3" rx="0.6" fill="#56b0dc"/><rect x="760.2" y="606" width="9.6" height="2" rx="1" fill="#e8eaed"/><rect x="783.1" y="606" width="9.6" height="2" rx="1" fill="#e8eaed"/><rect x="805.9" y="606" width="9.6" height="2" rx="1" fill="#e8eaed"/><rect x="828.8" y="606" width="9.6" height="2" rx="1" fill="#e8eaed"/><rect x="851.6" y="606" width="9.6" height="2" rx="1" fill="#e8eaed"/><rect x="874.5" y="606" width="9.6" height="2" rx="1" fill="#e8eaed"/><rect x="897.3" y="606" width="9.6" height="2" rx="1" fill="#e8eaed"/><rect x="920.2" y="606" width="9.6" height="2" rx="1" fill="#e8eaed"/><rect x="943.0" y="606" width="9.6" height="2" rx="1" fill="#e8eaed"/><rect x="746" y="568.5" width="8.4" height="1.4" fill="#e3e7eb"/><rect x="746" y="578.7" width="8.4" height="1.4" fill="#e3e7eb"/><rect x="746" y="589.1" width="8.4" height="1.4" fill="#e3e7eb"/><rect x="746" y="599.6" width="8.4" height="1.4" fill="#e3e7eb"/></svg>
<div class="a" style="left:731px;top:679px;width:246px;height:60px;background:#eff0f3;border-radius:4px;box-shadow:0 1px 3px rgba(0,0,0,0.16),0 0 1px rgba(0,0,0,0.12)"></div>
<div class="a" style="left:731px;top:679px;width:246px;height:20.5px;background:#fafbfd;border-radius:4px 4px 0 0"></div>
<div class="a" style="left:731px;top:699.5px;width:246px;height:1px;background:#e6e8ec"></div>
<svg class="a" style="left:736.70px;top:683.20px" width="13.60" height="13.60" viewBox="0 0 13.6 13.6"><circle cx="6.8" cy="6.8" r="6.8" fill="#2a68ee"/><rect x="3.80" y="3.50" width="1.9" height="6" fill="#fff"/><rect x="8.60" y="4.90" width="1.5" height="4.6" fill="#fff"/><path d="M5.70 6.40L8.60 7.20" stroke="#dfe6ff" stroke-width="1.3"/></svg>
<svg class="a" style="left:922.64px;top:680.79px;overflow:visible" width="18.72" height="18.72" viewBox="0 0 24 24"><g fill="none" stroke="#333" stroke-width="1.15" stroke-linejoin="round" stroke-linecap="round"><path d="M11.3 6.3H6Q4.6 6.3 4.6 7.7V16.2Q4.6 17.6 6 17.6H16.5Q17.9 17.6 17.9 16.2V14.3"/><path d="M14.8 5.6L19.4 9.3L14.8 12.9V10.7Q10.6 10.5 8.3 14Q9.4 8.5 14.8 8.1Z"/></g></svg>
<svg class="a" style="left:940.00px;top:681.00px;overflow:visible" width="19.20" height="19.20" viewBox="0 0 24 24"><g fill="none" stroke="#333" stroke-width="1.15" stroke-linejoin="round" stroke-linecap="round"><circle cx="11.5" cy="7.6" r="2.9"/><path d="M6.2 17.4C6.2 13.6 8.2 12.3 11.5 12.3C14.8 12.3 16.8 13.6 16.8 17.4Z"/></g></svg>
<svg class="a" style="left:956.70px;top:680.88px;overflow:visible" width="19.20" height="19.20" viewBox="0 0 24 24"><g fill="none" stroke="#333" stroke-width="1.15" stroke-linejoin="round" stroke-linecap="round"><path d="M14.2 4.8L17.5 8.2L9.2 16.4L5 17.5L6 13Z"/><path d="M12.6 6.4L15.9 9.8"/></g></svg>
<div class="a" style="left:209px;top:724px;width:788px;height:48px;background:#fff"></div>
<div class="a" style="left:818px;top:739px;width:77px;height:22px;background:#fff;border:1px solid #cfcfcf;border-radius:2px;box-sizing:border-box"></div>
<div class="a" style="left:905px;top:739px;width:77px;height:22px;background:#3f8bf2;border-radius:2px"></div>
<div class="t" style="left:818px;top:742.63px;width:77px;text-align:center;font-size:12.6px;line-height:16px;color:#333;font-weight:normal;">Cancel</div>
<div class="t" style="left:905px;top:742.63px;width:77px;text-align:center;font-size:12.6px;line-height:16px;color:#fff;font-weight:normal;">Save</div>
<div class="a" style="left:994px;top:134px;width:4.5px;height:446px;background:#8a8a8a;border-radius:2.25px;box-shadow:0 0 0 1.6px #fff"></div>
<div class="a" style="left:999px;top:1px;width:1px;height:773px;background:#1e1e1e"></div>
</body></html>
